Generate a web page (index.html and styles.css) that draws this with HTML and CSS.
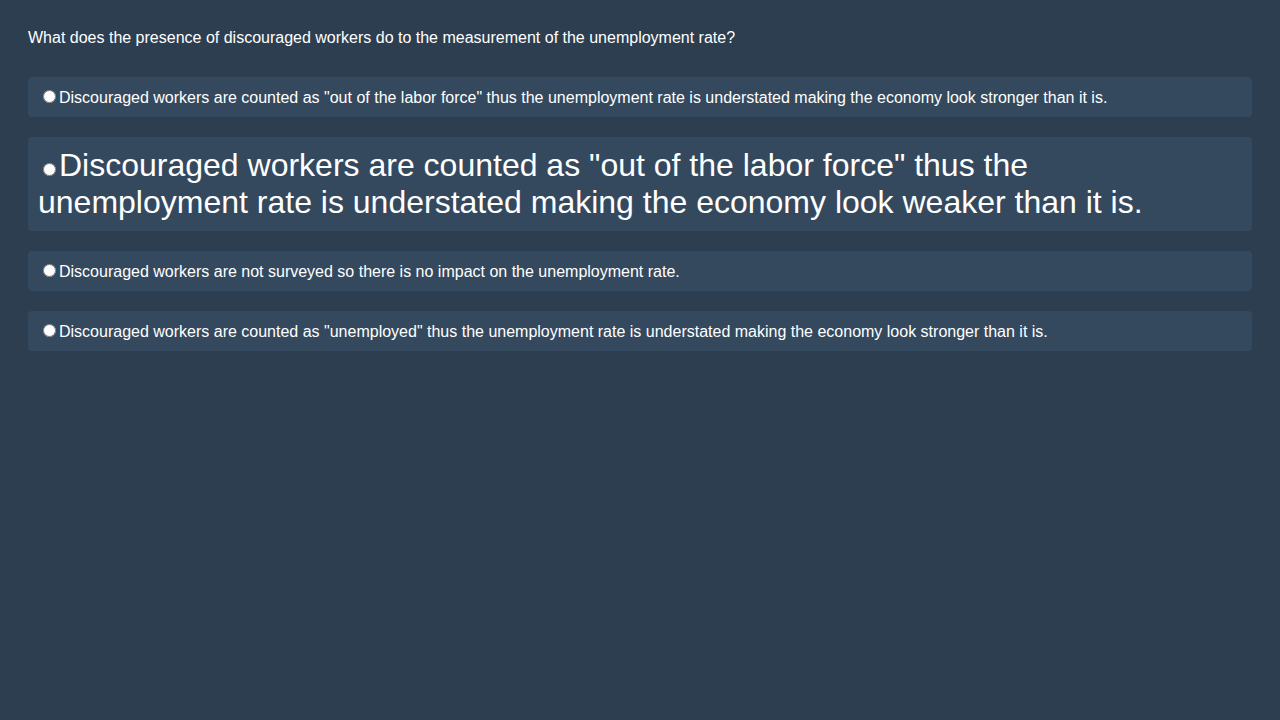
FILE: index.html
```html
<!DOCTYPE html>
<html>
<head>
<meta charset="utf-8">
<link rel="stylesheet" href="styles.css">
</head>
<body>
<div class="quiz">
  <p class="question">What does the presence of discouraged workers do to the measurement of the unemployment rate?</p>
  <div class="options">
    <label class="option"><input type="radio" name="a">Discouraged workers are counted as "out of the labor force" thus the unemployment rate is understated making the economy look stronger than it is.</label>
    <label class="option big"><input type="radio" name="a">Discouraged workers are counted as "out of the labor force" thus the unemployment rate is understated making the economy look weaker than it is.</label>
    <label class="option"><input type="radio" name="a">Discouraged workers are not surveyed so there is no impact on the unemployment rate.</label>
    <label class="option"><input type="radio" name="a">Discouraged workers are counted as "unemployed" thus the unemployment rate is understated making the economy look stronger than it is.</label>
  </div>
</div>
</body>
</html>
```
FILE: styles.css
```css
html, body {
  margin: 0;
  padding: 0;
  background: #2c3e50;
  color: #ffffff;
  font-family: "Liberation Sans", Arial, sans-serif;
  font-size: 16px;
}
.quiz {
  padding: 29px 28px 28px;
}
.question {
  margin: 0 0 30px 0;
}
.options {
  display: flex;
  flex-direction: column;
  gap: 20px;
}
.option {
  display: block;
  background: #34495e;
  border-radius: 4px;
  padding: 10px;
}
.option input {
  margin: 3px 3px 0 5px;
}
.option.big {
  font-size: 32px;
}
```
